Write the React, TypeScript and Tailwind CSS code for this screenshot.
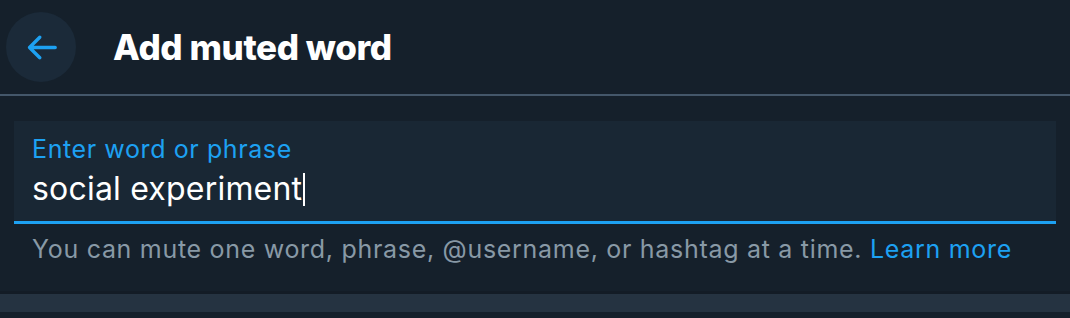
import React from "react";

function BackArrow() {
  return (
    <svg viewBox="0 0 24 24" className="w-[41px] h-[41px]" fill="#1da1f2">
      <path d="M20 11H7.414l4.293-4.293c.39-.39.39-1.023 0-1.414s-1.023-.39-1.414 0l-6 6c-.39.39-.39 1.023 0 1.414l6 6c.195.195.45.293.707.293s.512-.098.707-.293c.39-.39.39-1.023 0-1.414L7.414 13H20c.553 0 1-.447 1-1s-.447-1-1-1z" />
    </svg>
  );
}

export default function App() {
  return (
    <div
      className="w-full h-[318px] overflow-hidden bg-[#15202b] flex flex-col"
      style={{ fontFamily: "Inter, 'Liberation Sans', sans-serif" }}
    >
      {/* Header */}
      <div className="h-[94px] flex items-center shrink-0">
        <button className="ml-[6px] w-[70px] h-[70px] rounded-full bg-[#1b2a39] flex items-center justify-center">
          <BackArrow />
        </button>
        <h1 className="ml-[37px] text-[35px] font-extrabold text-white tracking-[-0.4px]">
          Add muted word
        </h1>
      </div>
      <div className="h-[2px] bg-[#44576a] shrink-0" />

      {/* Input */}
      <div className="px-[14px] pt-[25px]">
        <div className="h-[103px] bg-[#192734] border-b-[3px] border-[#1da1f2] px-[18px] pt-[14px]">
          <div className="text-[25px] leading-[28px] tracking-[0.6px] text-[#1da1f2]">
            Enter word or phrase
          </div>
          <div className="mt-[7px] flex items-center text-[32px] leading-[38px] tracking-[0.2px] text-white">
            <span>social experiment</span>
            <span className="inline-block w-[2px] h-[33px] bg-white ml-[1px]" />
          </div>
        </div>
        <p className="px-[18px] pt-[10px] text-[25px] leading-[30px] tracking-[0.7px] text-[#8899a6]">
          You can mute one word, phrase, @username, or hashtag at a time.{" "}
          <span className="text-[#1da1f2]">Learn more</span>
        </p>
      </div>

      {/* Bottom */}
      <div className="mt-auto mb-[6px]">
        <div className="h-[3px] bg-[#131c26]" />
        <div className="h-[18px] bg-[#253341]" />
      </div>
    </div>
  );
}
